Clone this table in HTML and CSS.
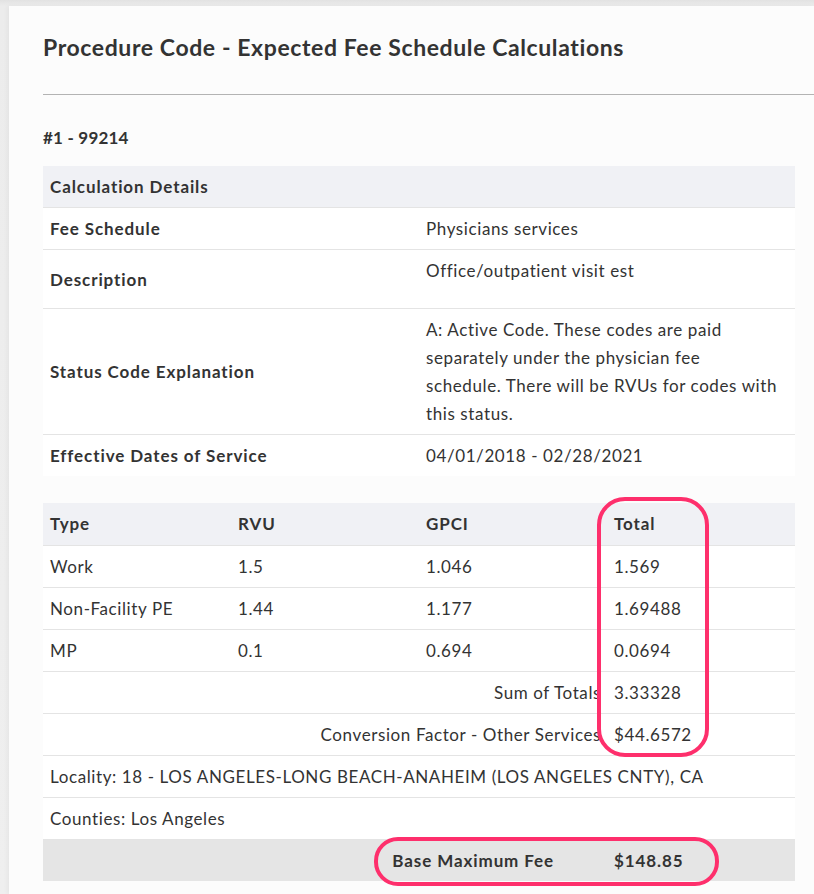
FILE: index.html
```html
<!DOCTYPE html>
<html lang="en">
<head>
<meta charset="utf-8">
<title>Procedure Code - Expected Fee Schedule Calculations</title>
<link rel="stylesheet" href="styles.css">
</head>
<body>
<div class="card">
  <h1 class="title">Procedure Code - Expected Fee Schedule Calculations</h1>
  <hr class="divider">
  <div class="content">
    <h2 class="code">#1 - 99214</h2>
    <table class="details">
      <thead>
        <tr><th colspan="2">Calculation Details</th></tr>
      </thead>
      <tbody>
        <tr><td class="label">Fee Schedule</td><td class="value">Physicians services</td></tr>
        <tr class="tall"><td class="label">Description</td><td class="value">Office/outpatient visit est</td></tr>
        <tr><td class="label">Status Code Explanation</td><td class="value">A: Active Code. These codes are paid separately under the physician fee<br>schedule. There will be RVUs for codes with<br>this status.</td></tr>
        <tr><td class="label">Effective Dates of Service</td><td class="value">04/01/2018 - 02/28/2021</td></tr>
      </tbody>
    </table>
    <div class="calc-wrap">
      <table class="calc">
        <thead>
          <tr><th>Type</th><th>RVU</th><th>GPCI</th><th>Total</th></tr>
        </thead>
        <tbody>
          <tr><td>Work</td><td>1.5</td><td>1.046</td><td>1.569</td></tr>
          <tr><td>Non-Facility PE</td><td>1.44</td><td>1.177</td><td>1.69488</td></tr>
          <tr><td>MP</td><td>0.1</td><td>0.694</td><td>0.0694</td></tr>
          <tr><td colspan="3" class="right">Sum of Totals</td><td>3.33328</td></tr>
          <tr><td colspan="3" class="right">Conversion Factor - Other Services</td><td>$44.6572</td></tr>
          <tr><td colspan="4">Locality: 18 - LOS ANGELES-LONG BEACH-ANAHEIM (LOS ANGELES CNTY), CA</td></tr>
          <tr><td colspan="4">Counties: Los Angeles</td></tr>
          <tr class="base"><td colspan="3" class="right base-label">Base Maximum Fee</td><td>$148.85</td></tr>
        </tbody>
      </table>
      <div class="ring ring-total"></div>
      <div class="ring ring-base"></div>
    </div>
  </div>
</div>
</body>
</html>
```
FILE: styles.css
```css
html, body {
  margin: 0;
  padding: 0;
}
body {
  background: linear-gradient(#e2e2e2, #ececec 6px, #efefef);
  font-family: "Lato", "Noto Sans", sans-serif;
  color: #333;
  overflow: hidden;
  height: 894px;
}
.card {
  margin: 6px 0 0 9px;
  background: #fcfcfc;
  padding: 27px 0 0 34px;
  height: 888px;
  box-sizing: border-box;
  box-shadow: -2px 0 4px rgba(0,0,0,0.04);
}
.title {
  margin: 0;
  font-size: 23px;
  line-height: 28px;
  font-weight: 700;
  letter-spacing: 0.6px;
  color: #333;
}
.divider {
  margin: 33px 0 0 0;
  border: 0;
  border-top: 1px solid #b3b3b3;
  height: 0;
}
.code {
  margin: 32px 0 17px 0;
  font-size: 17px;
  line-height: 22px;
  font-weight: 700;
  letter-spacing: 0.2px;
}
table {
  width: 752px;
  border-collapse: collapse;
  table-layout: fixed;
  background: #fff;
  font-size: 17px;
  line-height: 28px;
  letter-spacing: 0.6px;
}
th {
  background: #f0f1f5;
  text-align: left;
  font-weight: 700;
  letter-spacing: 0.9px;
  padding: 7px 7px 6px 7px;
}
td {
  padding: 7px 7px 6px 7px;
  border-top: 1px solid #e4e4e4;
  vertical-align: middle;
}
.details .label {
  font-weight: 700;
  letter-spacing: 0.9px;
  width: 50%;
}
.details .value {
  vertical-align: top;
  padding-right: 8px;
}
.details tr.tall {
  height: 59px;
}
.calc-wrap {
  position: relative;
  margin-top: 27px;
}
.calc th {
  padding: 7px 7px 7px 7px;
}
.right {
  text-align: right;
  padding-right: 6px;
}
.calc tr.base td {
  background: #e5e5e5;
  font-weight: 700;
  letter-spacing: 0.9px;
}
.calc td.base-label {
  padding-right: 53px;
}
.ring {
  position: absolute;
  border: 4px solid #fe2f6c;
  box-sizing: border-box;
}
.ring-total {
  left: 554px;
  top: -6px;
  width: 112px;
  height: 260px;
  border-radius: 28px;
}
.ring-base {
  left: 331px;
  top: 334px;
  width: 345px;
  height: 49px;
  border-radius: 24px;
}
```
